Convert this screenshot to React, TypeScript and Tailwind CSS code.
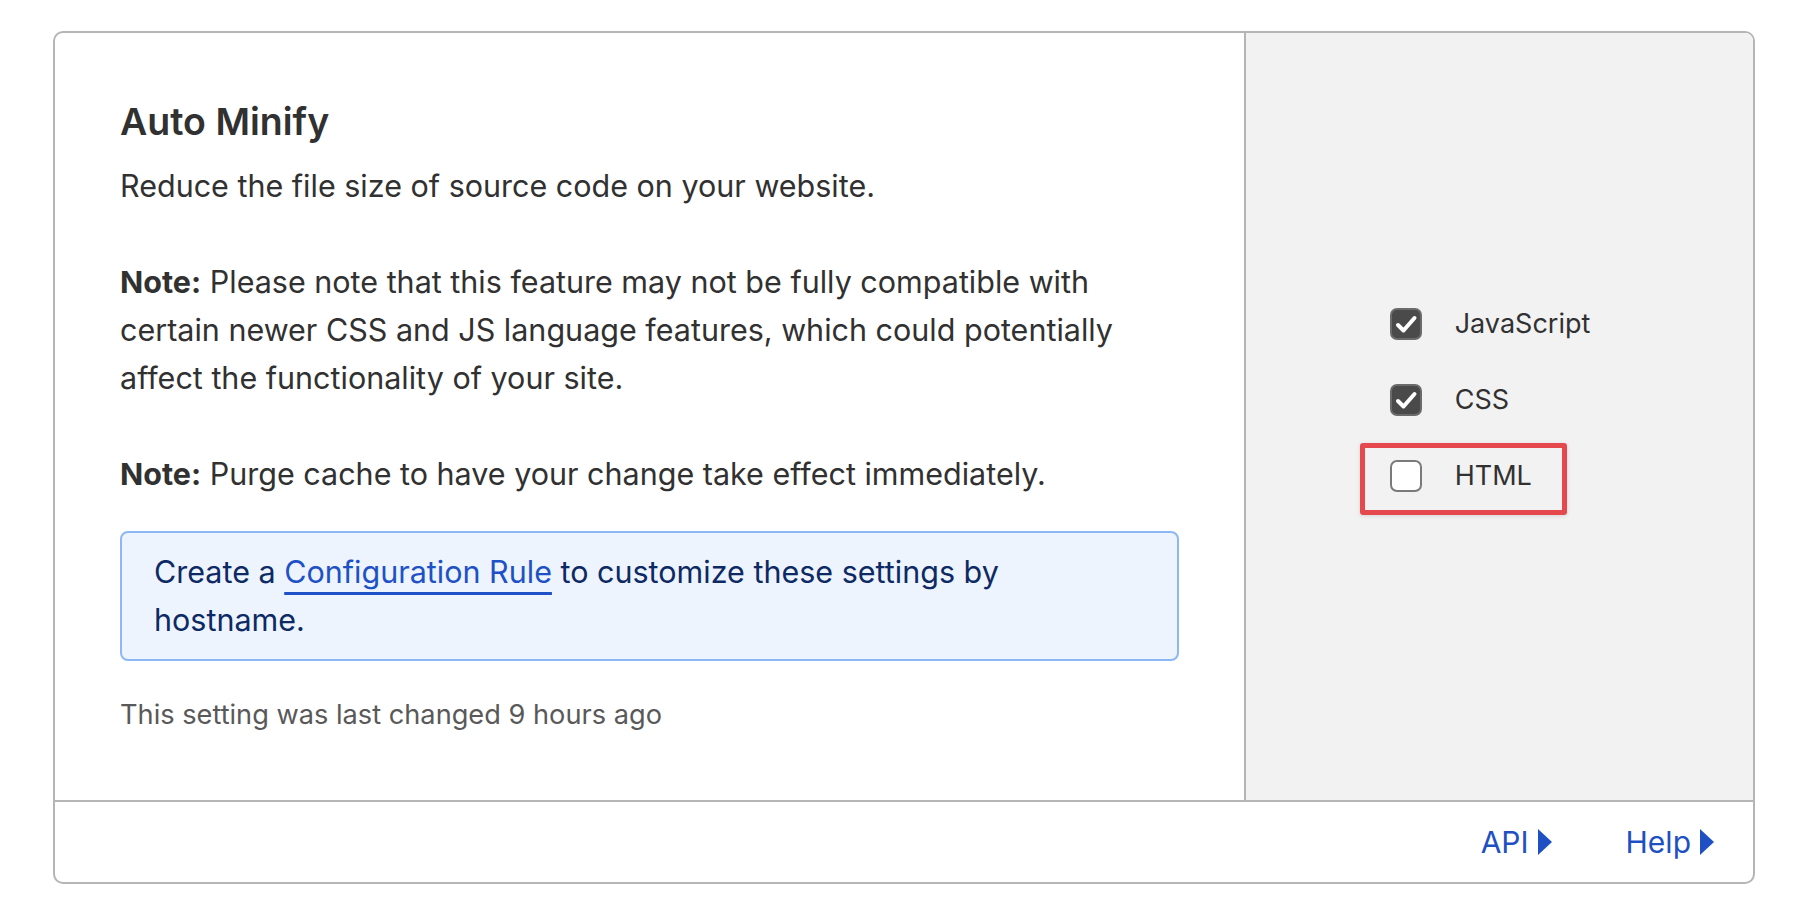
import { useState } from 'react';

const options = [
  { id: 'js', label: 'JavaScript', checked: true, highlight: false },
  { id: 'css', label: 'CSS', checked: true, highlight: false },
  { id: 'html', label: 'HTML', checked: false, highlight: true },
];

const Checkbox = ({ checked }: { checked: boolean }) => {
  if (checked) {
    return (
      <span className="flex h-[32px] w-[32px] shrink-0 items-center justify-center rounded-[7px] border-2 border-[#6b6b6b] bg-[#4a4a4a]">
        <svg width="28" height="28" viewBox="0 0 28 28" fill="none">
          <path d="M6 15l5.5 5.5L22.5 8" stroke="#ffffff" strokeWidth="4" strokeLinecap="round" strokeLinejoin="round" />
        </svg>
      </span>
    );
  }
  return <span className="block h-[32px] w-[32px] shrink-0 rounded-[7px] border-2 border-[#7a7a7a] bg-white" />;
};

const Triangle = () => (
  <svg width="14" height="26" viewBox="0 0 14 26" className="ml-[9px]">
    <path d="M0 0L14 13L0 26Z" fill="#1e50c4" />
  </svg>
);

const App = () => {
  const [values, setValues] = useState(options.map((o) => o.checked));

  return (
    <div
      className="min-h-screen bg-white pl-[53px] pt-[31px] text-[#313131]"
      style={{ fontFamily: 'Inter, "Noto Sans", sans-serif' }}
    >
      <div className="flex w-[1702px] flex-col overflow-hidden rounded-[10px] border-2 border-[#b5b5b5]">
        <div className="flex">
          <div className="flex-1 px-[65px] pb-[64px] pt-[64px]">
            <h1 className="text-[37.5px] font-semibold leading-[50px]">Auto Minify</h1>
            <p className="mt-[15px] text-[30.5px] leading-[48px]">
              Reduce the file size of source code on your website.
            </p>
            <p className="mt-[48px] text-[30.5px] leading-[48px]">
              <b className="font-bold">Note:</b> Please note that this feature may not be fully compatible with
              <br />
              certain newer CSS and JS language features, which could potentially
              <br />
              affect the functionality of your site.
            </p>
            <p className="mt-[48px] text-[30.5px] leading-[48px]">
              <b className="font-bold">Note:</b> Purge cache to have your change take effect immediately.
            </p>
            <div className="mt-[33px] rounded-[8px] border-2 border-[#8db7f5] bg-[#edf4fe] px-[32px] py-[15px] text-[30.5px] leading-[48px] text-[#0d2a64]">
              Create a{' '}
              <a href="#" className="text-[#1f51c6] underline decoration-[3px] underline-offset-[9px]">
                Configuration Rule
              </a>{' '}
              to customize these settings by
              <br />
              hostname.
            </div>
            <p className="mt-[33px] text-[27.2px] leading-[42px] text-[#595959]">
              This setting was last changed 9 hours ago
            </p>
          </div>
          <div className="flex w-[509px] shrink-0 flex-col items-center justify-center border-l-2 border-[#b5b5b5] bg-[#f2f2f2] pb-[27px] pr-[14px]">
            <div className="flex flex-col items-start gap-[4px]">
              {options.map((o, i) => (
                <label
                  key={o.id}
                  className={`flex cursor-pointer items-center gap-[33px] rounded-[3px] border-[5px] pb-[18px] pl-[25px] pr-[30px] pt-[12px] ${
                    o.highlight ? 'border-[#e5484d] shadow-[0_1px_4px_rgba(0,0,0,0.12)]' : 'border-transparent'
                  }`}
                  onClick={() => setValues(values.map((v, j) => (j === i ? !v : v)))}
                >
                  <Checkbox checked={values[i]} />
                  <span className="text-[27px] leading-[32px]">{o.label}</span>
                </label>
              ))}
            </div>
          </div>
        </div>
        <div className="flex h-[82px] items-center justify-end gap-[74px] border-t-2 border-[#b5b5b5] pr-[39px] text-[30px] text-[#1e50c4]">
          <a href="#" className="flex items-center">
            API
            <Triangle />
          </a>
          <a href="#" className="flex items-center">
            Help
            <Triangle />
          </a>
        </div>
      </div>
    </div>
  );
};

export default App;
